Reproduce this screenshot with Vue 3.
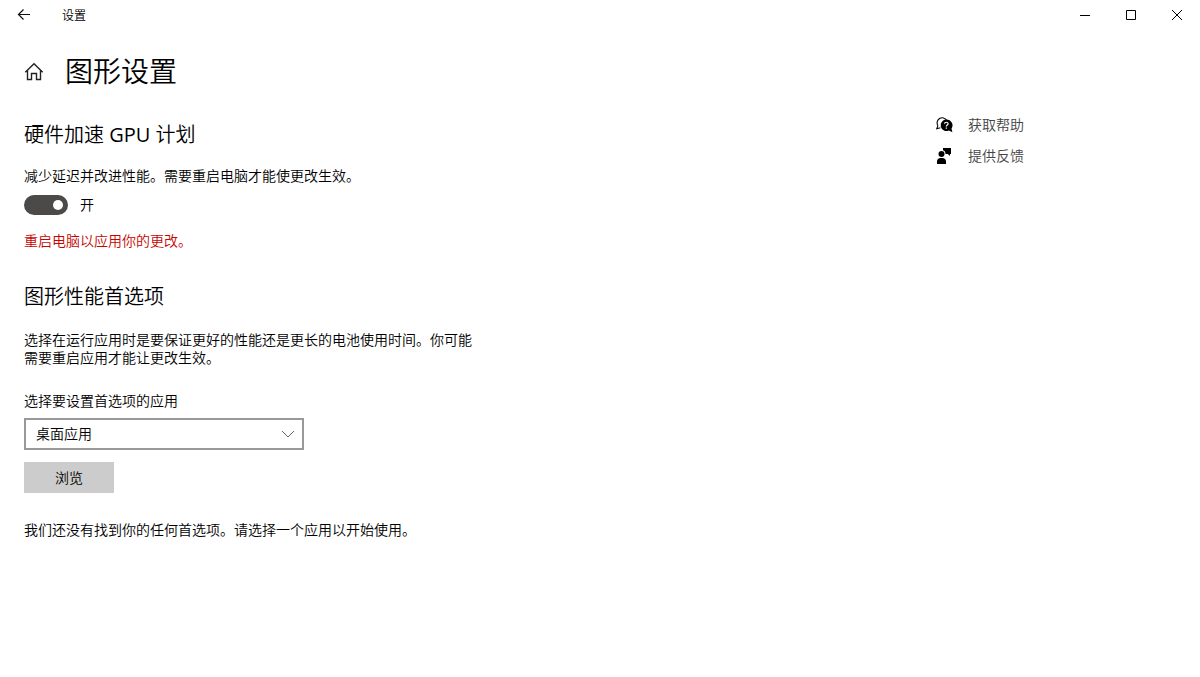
<script setup>
import { ref } from 'vue'

const scheduling = ref(true)
const appType = ref('desktop')
</script>

<template>
  <div class="window">
    <header class="titlebar">
      <button class="back" type="button" aria-label="返回">
        <svg width="14" height="12" viewBox="0 0 14 12" fill="none" stroke="#111" stroke-width="1.2">
          <path d="M13 5.5H1.5M6.5.5l-5 5 5 5" />
        </svg>
      </button>
      <span class="window-title">设置</span>
      <div class="window-controls">
        <button type="button" aria-label="最小化">
          <svg width="12" height="12" viewBox="0 0 12 12" fill="none" stroke="#000"><path d="M1 6.5h10" /></svg>
        </button>
        <button type="button" aria-label="最大化">
          <svg width="12" height="12" viewBox="0 0 12 12" fill="none" stroke="#000"><path d="M1.5 1.5h9v9h-9z" /></svg>
        </button>
        <button type="button" aria-label="关闭">
          <svg width="12" height="12" viewBox="0 0 12 12" fill="none" stroke="#000"><path d="M1 1l10 10M11 1L1 11" /></svg>
        </button>
      </div>
    </header>

    <div class="page-head">
      <button class="home" type="button" aria-label="主页">
        <svg width="20" height="20" viewBox="0 0 20 20" fill="none" stroke="#222" stroke-width="1.4">
          <path d="M1.3 11.300L10 2.800l8.700 8.500M3.500 9.400v9.100h4v-6h5v6h4V9.400" />
        </svg>
      </button>
      <h1>图形设置</h1>
    </div>

    <div class="body">
      <main>
        <section>
          <h2>硬件加速 <span class="latin">GPU</span> 计划</h2>
          <p class="summary">减少延迟并改进性能。需要重启电脑才能使更改生效。</p>
          <label class="toggle">
            <input v-model="scheduling" type="checkbox" role="switch" />
            <span>{{ scheduling ? '开' : '关' }}</span>
          </label>
          <p class="warning">重启电脑以应用你的更改。</p>
        </section>

        <section class="preferences">
          <h2>图形性能首选项</h2>
          <p class="description">选择在运行应用时是要保证更好的性能还是更长的电池使用时间。你可能需要重启应用才能让更改生效。</p>
          <label class="field-label" for="app-type">选择要设置首选项的应用</label>
          <div class="select-box">
            <select id="app-type" v-model="appType">
              <option value="desktop">桌面应用</option>
              <option value="store">Microsoft Store 应用</option>
            </select>
            <svg class="chevron" width="14" height="8" viewBox="0 0 14 8" fill="none" stroke="#666">
              <path d="M1 1l6 6 6-6" />
            </svg>
          </div>
          <button class="browse" type="button">浏览</button>
          <p class="empty">我们还没有找到你的任何首选项。请选择一个应用以开始使用。</p>
        </section>
      </main>

      <aside>
        <a href="#help">
          <svg width="18" height="18" viewBox="0 0 18 18">
            <path d="M1.900 9.600A4.800 4.800 0 1 1 10.600 4.200M1.900 9.600L.8 12.700l3.600-.9" fill="none" stroke="#000" stroke-width="1.100" />
            <path d="M10.300 3.600a5.700 5.700 0 1 0 2.600 10.800l3.500 1.800-.9-3.700A5.700 5.700 0 0 0 10.300 3.600z" fill="#000" />
            <path d="M8.500 7.800c.1-2.100 3.700-2.100 3.600 0 0 1.300-1.800 1.200-1.800 2.800M10.300 11.400v1.300" fill="none" stroke="#fff" stroke-width="1.200" />
          </svg>
          <span>获取帮助</span>
        </a>
        <a href="#feedback">
          <svg width="18" height="18" viewBox="0 0 18 18" fill="#000">
            <circle cx="5.500" cy="7" r="3" />
            <path d="M1 17v-2.500C1 12.300 2.500 11 4.500 11h2c2 0 3.500 1.300 3.500 3.500V17zM7 1h8v6h-1v2l-2.200-2H9.500C9.600 5 8.700 3.700 7 3.200z" />
          </svg>
          <span>提供反馈</span>
        </a>
      </aside>
    </div>
  </div>
</template>

<style>
body {
  margin: 0;
  background: #fff;
}
</style>

<style scoped>
.window {
  min-height: 100vh;
  background: #fff;
  color: #000;
  font-family: "Open Sans", "Noto Sans CJK SC", sans-serif;
  font-size: 14px;
  font-weight: 350;
  line-height: 18px;
}

h1,
h2,
p {
  margin: 0;
  font-weight: inherit;
}

button {
  display: flex;
  align-items: center;
  justify-content: center;
  padding: 0;
  border: 0;
  background: transparent;
  color: inherit;
  font: inherit;
}

.titlebar {
  display: flex;
  align-items: center;
  height: 30px;
}

.back {
  width: 48px;
  height: 30px;
}

.window-title {
  margin-left: 14px;
  padding-top: 2px;
  font-size: 12px;
  line-height: 16px;
}

.window-controls {
  display: flex;
  margin-left: auto;
}

.window-controls button {
  width: 46px;
  height: 30px;
}

.page-head {
  display: flex;
  align-items: center;
  gap: 21px;
  padding: 23px 24px 32px;
}

h1 {
  font-size: 28px;
  line-height: 36px;
}

h2 {
  font-size: 20px;
  line-height: 28px;
}

.latin {
  font-weight: 400;
}

.body {
  display: grid;
  grid-template-columns: minmax(0, 1fr) 264px;
  padding-left: 24px;
}

.summary {
  margin-top: 18px;
}

.toggle {
  display: flex;
  align-items: center;
  gap: 12px;
  width: fit-content;
  margin-top: 10px;
}

.toggle input {
  display: flex;
  align-items: center;
  box-sizing: border-box;
  width: 44px;
  height: 20px;
  margin: 0;
  padding: 0 5px;
  border-radius: 10px;
  background: #4c4a48;
  appearance: none;
}

.toggle input::before {
  width: 10px;
  height: 10px;
  border-radius: 50%;
  background: #fff;
  content: "";
}

.toggle input:checked::before {
  margin-left: auto;
}

.warning {
  margin-top: 17px;
  color: #c50500;
}

.preferences {
  margin-top: 33px;
}

.description {
  max-width: 456px;
  margin-top: 20px;
}

.field-label {
  display: block;
  margin-top: 25px;
}

.select-box {
  position: relative;
  max-width: 280px;
  margin-top: 8px;
}

select {
  display: block;
  box-sizing: border-box;
  width: 100%;
  height: 32px;
  padding: 0 32px 0 10px;
  border: 2px solid #999;
  border-radius: 0;
  background: #fff;
  color: #000;
  font: inherit;
  appearance: none;
}

.chevron {
  position: absolute;
  top: 12px;
  right: 9px;
  pointer-events: none;
}

.browse {
  width: 90px;
  height: 31px;
  margin-top: 12px;
  background: #ccc;
}

.empty {
  margin-top: 28px;
}

aside {
  display: flex;
  flex-direction: column;
  align-items: flex-start;
  gap: 13px;
  margin-top: -5px;
}

aside a {
  display: flex;
  align-items: center;
  gap: 14px;
  color: #444;
  text-decoration: none;
}
</style>
